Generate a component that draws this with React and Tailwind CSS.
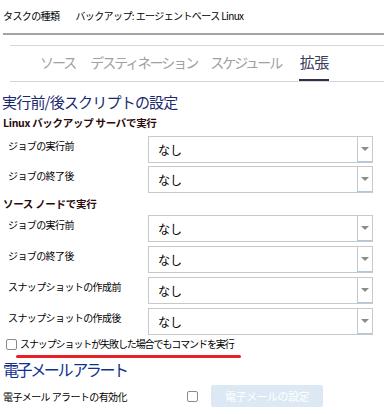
import React from "react";

const font = { fontFamily: '"Noto Sans CJK JP", "Noto Sans", sans-serif' };

function Select() {
  return (
    <div className="flex h-[27px] w-[225px] border border-[#c8c8c8] bg-white">
      <div className="flex flex-1 items-center pl-[9px] text-[12px] leading-none text-black">なし</div>
      <div className="flex w-[15px] items-center justify-center border-l border-[#c8c8c8] border-b border-b-[#a9c8ea]">
        <div className="h-0 w-0 border-x-[4px] border-t-[4px] border-x-transparent border-t-[#8a8a8a]" />
      </div>
    </div>
  );
}

function Row({ label }) {
  return (
    <div className="flex h-[27px]">
      <div className="w-[148px] whitespace-nowrap pl-[8px] pt-[3px] text-[10px] leading-[14px] tracking-[-0.6px] text-black">
        {label}
      </div>
      <Select />
    </div>
  );
}

export default function App() {
  const tabs = ["ソース", "デスティネーション", "スケジュール"];
  return (
    <div className="h-[414px] w-[384px] overflow-hidden bg-white" style={font}>
      <div className="flex h-[33px] items-center whitespace-nowrap pl-[3px] pb-[2px] text-[10px] tracking-[-0.6px] text-black">
        <span>タスクの種類</span>
        <span className="ml-[16px]">バックアップ: エージェントベース Linux</span>
      </div>
      <div className="ml-[3px] h-[2px] bg-[#a4a4a4]" />
      <div className="mt-[10px] ml-[10px] h-px bg-[#d6d6d6]" />
      <div className="ml-[10px] flex h-[35px] items-end whitespace-nowrap pl-[30px] text-[14px] tracking-[-2px]">
        <div className="mr-[15px] flex h-full items-center pb-[2px] text-[#a0a0a0]">{tabs[0]}</div>
        <div className="mr-[13px] flex h-full items-center pb-[2px] text-[#a0a0a0]">{tabs[1]}</div>
        <div className="mr-[18px] flex h-full items-center pb-[2px] text-[#a0a0a0]">{tabs[2]}</div>
        <div className="flex h-full flex-col items-center justify-center text-[15px] tracking-[-0.5px] text-[#3a3a5a]">
          <div className="flex flex-1 items-center">拡張</div>
          <div className="h-[2px] w-[30px] bg-[#2f2f4f]" />
        </div>
      </div>
      <div className="ml-[10px] h-px bg-[#d6d6d6]" />

      <div className="mt-[10px] whitespace-nowrap pl-[2px] text-[15px] leading-[20px] tracking-[-0.8px] text-[#1b2a6e]">
        実行前/後スクリプトの設定
      </div>
      <div className="mt-[3px] whitespace-nowrap pl-[3px] text-[10.5px] font-bold leading-[16px] tracking-[-0.3px] text-[#2a0a0a]">
        Linux バックアップ サーバで実行
      </div>
      <div className="mt-[5px] flex flex-col gap-[3px]">
        <Row label="ジョブの実行前" />
        <Row label="ジョブの終了後" />
      </div>
      <div className="mt-[3px] whitespace-nowrap pl-[3px] text-[10.5px] font-bold leading-[16px] tracking-[-0.3px] text-[#2a0a0a]">
        ソース ノードで実行
      </div>
      <div className="mt-[3px] flex flex-col gap-[4px]">
        <Row label="ジョブの実行前" />
        <Row label="ジョブの終了後" />
        <Row label="スナップショットの作成前" />
        <Row label="スナップショットの作成後" />
      </div>

      <div className="mt-[2px] flex items-center pl-[6px]">
        <div className="h-[11px] w-[11px] rounded-[2px] border border-[#8a8a8a]" />
        <span className="ml-[3px] whitespace-nowrap text-[10px] leading-[14px] tracking-[-1.1px] text-black">
          スナップショットが失敗した場合でもコマンドを実行
        </span>
      </div>
      <div className="ml-[16px] mt-[4px] h-[3px] w-[225px] rounded-full bg-[#e8202a]" />
      <div className="mt-[1px] whitespace-nowrap pl-[3px] text-[16px] leading-[20px] tracking-[-2.4px] text-[#11318f]">
        電子メール アラート
      </div>
      <div className="mt-[6px] flex items-center pl-[3px]">
        <div className="w-[184px] whitespace-nowrap text-[10px] tracking-[-0.6px] text-black">電子メール アラートの有効化</div>
        <div className="h-[11px] w-[11px] rounded-[2px] border border-[#8a8a8a]" />
        <div className="ml-[13px] flex h-[22px] w-[112px] items-center justify-center whitespace-nowrap rounded-[2px] bg-[#dce9f4] text-[11px] tracking-[-0.5px] text-white">
          電子メールの設定
        </div>
      </div>
    </div>
  );
}
